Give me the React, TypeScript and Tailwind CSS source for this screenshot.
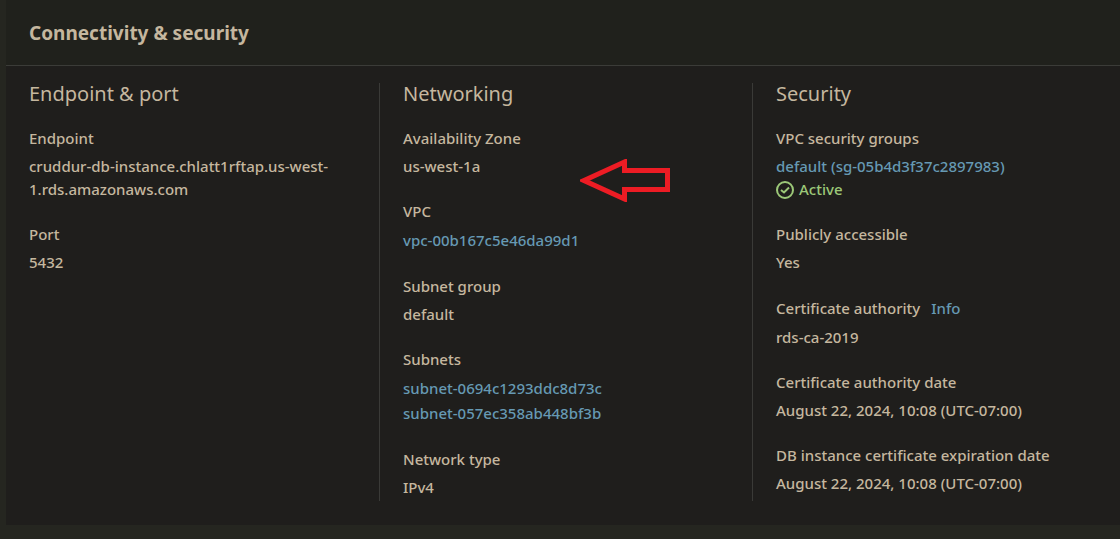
import type { ReactNode } from "react";

function Field({ label, info, children }: { label: string; info?: boolean; children: ReactNode }) {
  return (
    <div>
      <dt className={info ? "leading-[25px]" : "leading-[23px]"}>
        {label}
        {info && (
          <a href="#info" className="ml-[11px] text-[#6699b3] hover:underline">
            Info
          </a>
        )}
      </dt>
      <dd className="mt-[5px] leading-[23px]">{children}</dd>
    </div>
  );
}

function ResourceLink({ children }: { children: ReactNode }) {
  return (
    <a href="#resource" className="block leading-[25px] text-[#6699b3] hover:underline">
      {children}
    </a>
  );
}

function Column({ title, divided, children }: { title: string; divided?: boolean; children: ReactNode }) {
  return (
    <section className={divided ? "border-l border-[#3a3a37] pr-7 pb-[2px] pl-[23px]" : "pr-7 pb-[2px] pl-[23px]"}>
      <h3 className="text-[20px] leading-[22px] font-normal">{title}</h3>
      <dl className="mt-[22px] flex flex-col gap-[22px]">{children}</dl>
    </section>
  );
}

function ActiveIcon() {
  return (
    <svg viewBox="0 0 18 18" className="size-[18px]" fill="none" stroke="currentColor" strokeWidth="2" aria-hidden="true">
      <circle cx="9" cy="9" r="8" />
      <path d="M5 9 8 11.500l5-5" />
    </svg>
  );
}

export default function App() {
  return (
    <main className="min-h-screen bg-[#252620] pb-[14px] pl-[6px] font-['Noto_Sans',sans-serif] text-[15px] font-medium text-[#c5b79f]">
      <div className="bg-[#1f1e1c]">
        <header className="border-b border-[#3b3c38] bg-[#20211c] px-[23px] pt-[21px] pb-[19px]">
          <h2 className="text-[19px] leading-[25px] font-bold">Connectivity &amp; security</h2>
        </header>
        <div className="grid grid-cols-[373fr_373fr_368fr] pt-[17px] pb-6">
          <Column title="Endpoint &amp; port">
            <Field label="Endpoint">cruddur-db-instance.chlatt1rftap.us-west-1.rds.amazonaws.com</Field>
            <Field label="Port">5432</Field>
          </Column>
          <Column title="Networking" divided>
            <div className="relative">
              <Field label="Availability Zone">us-west-1a</Field>
              <svg
                viewBox="0 0 90 43"
                className="absolute top-8 left-[177px] h-[43px] w-[90px]"
                fill="none"
                stroke="#ed1c24"
                strokeWidth="5"
                aria-hidden="true"
              >
                <path d="M4 21.500 44.500 3V11.500H87.500V30.500H44.500V40Z" />
              </svg>
            </div>
            <Field label="VPC">
              <ResourceLink>vpc-00b167c5e46da99d1</ResourceLink>
            </Field>
            <Field label="Subnet group">default</Field>
            <Field label="Subnets">
              <ResourceLink>subnet-0694c1293ddc8d73c</ResourceLink>
              <ResourceLink>subnet-057ec358ab448bf3b</ResourceLink>
            </Field>
            <Field label="Network type">IPv4</Field>
          </Column>
          <Column title="Security" divided>
            <Field label="VPC security groups">
              <a href="#security-group" className="block text-[#6699b3] hover:underline">
                default (sg-05b4d3f37c2897983)
              </a>
              <span className="flex items-center gap-[5px] text-[#9cc878]">
                <ActiveIcon />
                Active
              </span>
            </Field>
            <Field label="Publicly accessible">Yes</Field>
            <Field label="Certificate authority" info>
              rds-ca-2019
            </Field>
            <Field label="Certificate authority date">August 22, 2024, 10:08 (UTC-07:00)</Field>
            <Field label="DB instance certificate expiration date">August 22, 2024, 10:08 (UTC-07:00)</Field>
          </Column>
        </div>
      </div>
    </main>
  );
}
